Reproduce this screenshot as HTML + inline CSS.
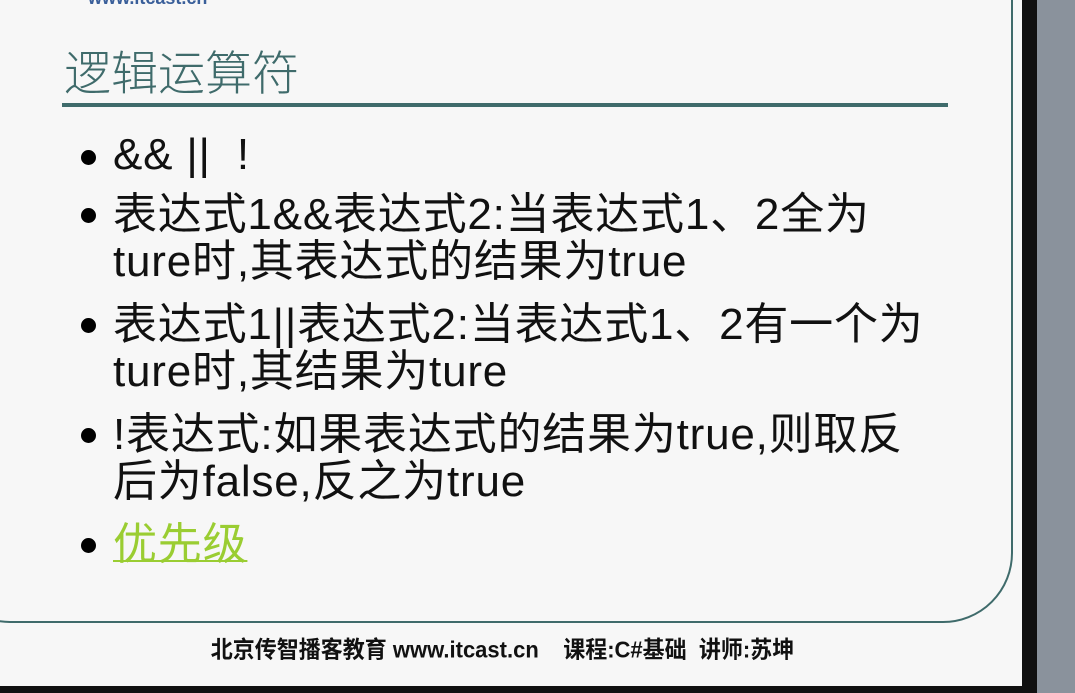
<!DOCTYPE html>
<html><head><meta charset="utf-8"><style>
body{margin:0;width:1075px;height:693px;overflow:hidden;background:#f7f7f7;position:relative;font-family:"Liberation Sans","Noto Sans CJK SC",sans-serif}
.l{position:absolute;left:113px;height:47px;line-height:47px;font-size:44px;color:#111;white-space:nowrap;letter-spacing:0.8px}
.b{position:absolute;left:81px;width:15px;height:15px;border-radius:50%;background:#000}
</style></head><body>
<div style="position:absolute;left:1022px;top:0;width:15px;height:693px;background:#111"></div>
<div style="position:absolute;left:1037px;top:0;width:38px;height:693px;background:#8a929c"></div>
<div style="position:absolute;left:0;top:686px;width:1037px;height:7px;background:#111"></div>
<div style="position:absolute;left:-60px;top:-80px;width:1073px;height:703px;border:2px solid #3f6b6b;border-radius:70px;box-sizing:border-box"></div>
<div style="position:absolute;left:88px;top:-12px;font-size:18px;color:#3a5f9a;font-weight:bold">www.itcast.cn</div>
<div style="position:absolute;left:64px;top:44px;font-size:47px;color:#3f6b6b;font-family:'Noto Sans CJK SC',sans-serif;font-weight:300;line-height:52px">逻辑运算符</div>
<div style="position:absolute;left:62px;top:103px;width:886px;height:4px;background:#3f6b6b"></div>
<div class="b" style="top:150px"></div><div class="l" style="top:131px">&amp;&amp; || &nbsp;!</div>
<div class="b" style="top:208px"></div><div class="l" style="top:191px">表达式1&amp;&amp;表达式2:当表达式1、2全为</div>
<div class="l" style="top:238px">ture时,其表达式的结果为true</div>
<div class="b" style="top:318px"></div><div class="l" style="top:301px">表达式1||表达式2:当表达式1、2有一个为</div>
<div class="l" style="top:348px">ture时,其结果为ture</div>
<div class="b" style="top:428px"></div><div class="l" style="top:411px">!表达式:如果表达式的结果为true,则取反</div>
<div class="l" style="top:458px">后为false,反之为true</div>
<div class="b" style="top:538px"></div><div class="l" style="top:521px;color:#9acd32;text-decoration:underline;text-decoration-thickness:2px">优先级</div>
<div style="position:absolute;left:0;width:1005px;top:635px;text-align:center;font-size:22px;font-weight:bold;color:#111;line-height:30px;white-space:nowrap;transform:scaleY(1.05)">北京传智播客教育 www.itcast.cn &nbsp;&nbsp; 课程:C#基础 &nbsp;讲师:苏坤</div>
</body></html>
